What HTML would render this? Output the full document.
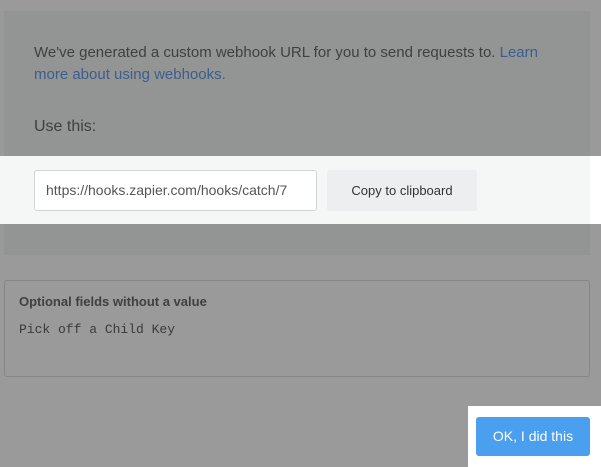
<!DOCTYPE html>
<html><head><style>
body{margin:0;width:601px;height:467px;background:#999a99;position:relative;overflow:hidden;font-family:"Liberation Sans",sans-serif}
.panel{position:absolute;left:4px;top:11px;width:586px;height:244px;background:#939594}
.t1{position:absolute;left:34px;top:42px;font-size:15px;line-height:22px;color:#3f4140;width:520px}
.t1 a{color:#3d5d8c;text-decoration:none}
.use{position:absolute;left:34px;top:118px;font-size:16px;color:#3f4140}
.strip{position:absolute;left:0;top:156px;width:590px;height:68px;background:#f5f7f6}
.stripw{position:absolute;left:590px;top:156px;width:11px;height:68px;background:#fff}
.inp{position:absolute;left:34px;top:170px;border:1px solid #d0d4d6;border-radius:3px;background:#fff;font-size:14px;color:#555;line-height:39px;padding-left:11px;box-sizing:border-box;width:283px;height:41px;overflow:hidden;white-space:nowrap}
.btn{position:absolute;left:327px;top:170px;width:150px;height:41px;background:#eceeef;border-radius:3px;font-size:13px;color:#333;text-align:center;line-height:41px}
.opt{position:absolute;left:4px;top:280px;width:584px;height:95px;border:1px solid #858786;border-radius:3px}
.opt b{position:absolute;left:14px;top:13px;font-size:13px;color:#3f4140}
.opt code{position:absolute;left:14px;top:41px;font-family:"Liberation Mono",monospace;font-size:13px;color:#3a3a3a}
.okw{position:absolute;left:468px;top:406px;width:133px;height:61px;background:#fff}
.ok{position:absolute;left:476px;top:417px;width:114px;height:39px;background:#4a9fee;border-radius:3px;color:#fff;font-size:14px;text-align:center;line-height:39px}
</style></head><body>
<div class="panel"></div>
<div class="t1">We've generated a custom webhook URL for you to send requests to. <a>Learn more about using webhooks.</a></div>
<div class="use">Use this:</div>
<div class="strip"></div>
<div class="stripw"></div>
<div class="inp">https://hooks.zapier.com/hooks/catch/7</div>
<div class="btn">Copy to clipboard</div>
<div class="opt"><b>Optional fields without a value</b><code>Pick off a Child Key</code></div>
<div class="okw"></div>
<div class="ok">OK, I did this</div>
</body></html>
